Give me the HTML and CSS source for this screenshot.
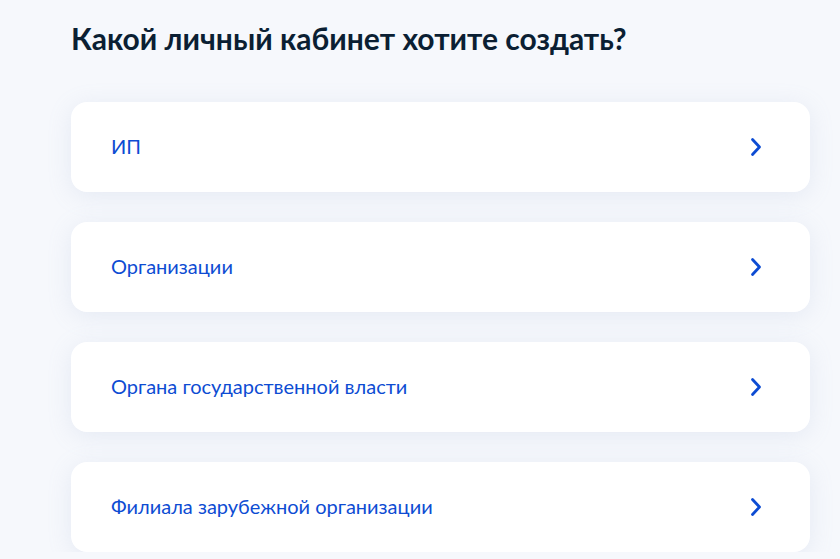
FILE: index.html
```html
<!DOCTYPE html>
<html lang="ru">
<head>
<meta charset="utf-8">
<link rel="stylesheet" href="styles.css">
</head>
<body>
<main class="page">
  <h1 class="title">Какой личный кабинет хотите создать?</h1>
  <ul class="list">
    <li class="card"><span class="card-text">ИП</span><svg class="chev" viewBox="0 0 12 20" width="12" height="20"><path d="M2.5 2.5 L9.5 10 L2.5 17.5" fill="none" stroke="#0d4cd3" stroke-width="2.8" stroke-linecap="round" stroke-linejoin="round"/></svg></li>
    <li class="card"><span class="card-text">Организации</span><svg class="chev" viewBox="0 0 12 20" width="12" height="20"><path d="M2.5 2.5 L9.5 10 L2.5 17.5" fill="none" stroke="#0d4cd3" stroke-width="2.8" stroke-linecap="round" stroke-linejoin="round"/></svg></li>
    <li class="card"><span class="card-text">Органа государственной власти</span><svg class="chev" viewBox="0 0 12 20" width="12" height="20"><path d="M2.5 2.5 L9.5 10 L2.5 17.5" fill="none" stroke="#0d4cd3" stroke-width="2.8" stroke-linecap="round" stroke-linejoin="round"/></svg></li>
    <li class="card"><span class="card-text">Филиала зарубежной организации</span><svg class="chev" viewBox="0 0 12 20" width="12" height="20"><path d="M2.5 2.5 L9.5 10 L2.5 17.5" fill="none" stroke="#0d4cd3" stroke-width="2.8" stroke-linecap="round" stroke-linejoin="round"/></svg></li>
  </ul>
</main>
</body>
</html>
```
FILE: styles.css
```css
html, body {
  margin: 0;
  padding: 0;
  background: #f6f8fc;
  font-family: Lato, "Noto Sans", sans-serif;
}
.page {
  width: 739px;
  padding: 20px 0 0 71px;
}
.title {
  margin: 0 0 46px;
  font-size: 30px;
  line-height: 36px;
  font-weight: 700;
  color: #0b1f33;
}
.list {
  list-style: none;
  margin: 0;
  padding: 0;
  display: flex;
  flex-direction: column;
  gap: 30px;
}
.card {
  height: 90px;
  box-sizing: border-box;
  background: #ffffff;
  border-radius: 16px;
  box-shadow: 0 4px 24px rgba(140, 160, 200, 0.16);
  display: flex;
  align-items: center;
  justify-content: space-between;
  padding: 0 48px 2px 40px;
}
.card-text {
  font-size: 20px;
  line-height: 24px;
  color: #0d4cd3;
}
.chev {
  display: block;
  margin-top: 2px;
}
```
